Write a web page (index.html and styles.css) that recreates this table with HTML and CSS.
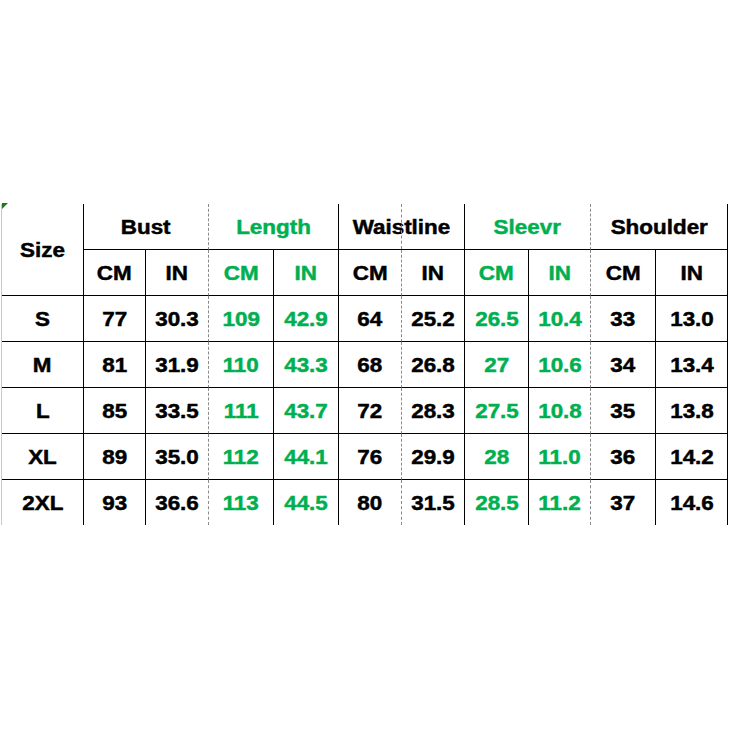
FILE: index.html
```html
<!DOCTYPE html>
<html>
<head>
<meta charset="utf-8">
<link rel="stylesheet" href="styles.css">
</head>
<body>
<div class="chart">
  <div class="c size"><span class="t">Size</span></div>
  <div class="c span2 dr"><span class="t">Bust</span></div>
  <div class="c span2 g"><span class="t">Length</span></div>
  <div class="c span2 mid"><span class="t">Waistline</span></div>
  <div class="c span2 g dr"><span class="t">Sleevr</span></div>
  <div class="c span2"><span class="t">Shoulder</span></div>

  <div class="c"><span class="t">CM</span></div>
  <div class="c dr"><span class="t">IN</span></div>
  <div class="c g"><span class="t">CM</span></div>
  <div class="c g"><span class="t">IN</span></div>
  <div class="c dr"><span class="t">CM</span></div>
  <div class="c"><span class="t">IN</span></div>
  <div class="c g"><span class="t">CM</span></div>
  <div class="c g dr"><span class="t">IN</span></div>
  <div class="c"><span class="t">CM</span></div>
  <div class="c"><span class="t">IN</span></div>

  <div class="c"><span class="t">S</span></div>
  <div class="c"><span class="t">77</span></div>
  <div class="c dr"><span class="t">30.3</span></div>
  <div class="c g"><span class="t">109</span></div>
  <div class="c g"><span class="t">42.9</span></div>
  <div class="c dr"><span class="t">64</span></div>
  <div class="c"><span class="t">25.2</span></div>
  <div class="c g"><span class="t">26.5</span></div>
  <div class="c g dr"><span class="t">10.4</span></div>
  <div class="c"><span class="t">33</span></div>
  <div class="c"><span class="t">13.0</span></div>

  <div class="c"><span class="t">M</span></div>
  <div class="c"><span class="t">81</span></div>
  <div class="c dr"><span class="t">31.9</span></div>
  <div class="c g"><span class="t">110</span></div>
  <div class="c g"><span class="t">43.3</span></div>
  <div class="c dr"><span class="t">68</span></div>
  <div class="c"><span class="t">26.8</span></div>
  <div class="c g"><span class="t">27</span></div>
  <div class="c g dr"><span class="t">10.6</span></div>
  <div class="c"><span class="t">34</span></div>
  <div class="c"><span class="t">13.4</span></div>

  <div class="c"><span class="t">L</span></div>
  <div class="c"><span class="t">85</span></div>
  <div class="c dr"><span class="t">33.5</span></div>
  <div class="c g"><span class="t">111</span></div>
  <div class="c g"><span class="t">43.7</span></div>
  <div class="c dr"><span class="t">72</span></div>
  <div class="c"><span class="t">28.3</span></div>
  <div class="c g"><span class="t">27.5</span></div>
  <div class="c g dr"><span class="t">10.8</span></div>
  <div class="c"><span class="t">35</span></div>
  <div class="c"><span class="t">13.8</span></div>

  <div class="c"><span class="t">XL</span></div>
  <div class="c"><span class="t">89</span></div>
  <div class="c dr"><span class="t">35.0</span></div>
  <div class="c g"><span class="t">112</span></div>
  <div class="c g"><span class="t">44.1</span></div>
  <div class="c dr"><span class="t">76</span></div>
  <div class="c"><span class="t">29.9</span></div>
  <div class="c g"><span class="t">28</span></div>
  <div class="c g dr"><span class="t">11.0</span></div>
  <div class="c"><span class="t">36</span></div>
  <div class="c"><span class="t">14.2</span></div>

  <div class="c nb"><span class="t">2XL</span></div>
  <div class="c nb"><span class="t">93</span></div>
  <div class="c nb dr"><span class="t">36.6</span></div>
  <div class="c nb g"><span class="t">113</span></div>
  <div class="c nb g"><span class="t">44.5</span></div>
  <div class="c nb dr"><span class="t">80</span></div>
  <div class="c nb"><span class="t">31.5</span></div>
  <div class="c nb g"><span class="t">28.5</span></div>
  <div class="c nb g dr"><span class="t">11.2</span></div>
  <div class="c nb"><span class="t">37</span></div>
  <div class="c nb"><span class="t">14.6</span></div>
</div>
</body>
</html>
```

FILE: styles.css
```css
html, body {
  margin: 0;
  padding: 0;
  background: #ffffff;
}

body {
  font-family: "Liberation Sans", Arial, sans-serif;
  font-weight: bold;
  font-size: 19.5px;
  color: #000000;
}

.chart {
  display: grid;
  grid-template-columns: 82px 62px 63px 65px 65px 63px 63px 64px 62px 65px 72px;
  grid-template-rows: 46px 46px 46px 46px 46px 46px 45px;
  width: 726px;
  margin: 204px 0 0 1px;
  border-left: 1px solid #c3cad6;
}

.c {
  position: relative;
  box-sizing: border-box;
  display: flex;
  align-items: center;
  justify-content: center;
  border-right: 1px solid #000000;
  border-bottom: 1px solid #000000;
  padding-top: 2px;
}

.t {
  display: inline-block;
  transform: scaleX(1.15);
  line-height: 1;
  -webkit-text-stroke: 0.45px currentColor;
}

.g {
  color: #00b050;
}

.dr {
  border-right: 1px dashed #8a8a8a;
}

.nb {
  border-bottom: none;
}

.span2 {
  grid-column: span 2;
}

.size {
  grid-row: span 2;
}

.size::before {
  content: "";
  position: absolute;
  top: -1px;
  left: 0;
  width: 0;
  height: 0;
  border-top: 6px solid #1f7a1f;
  border-right: 6px solid transparent;
}

.mid::after {
  content: "";
  position: absolute;
  top: 0;
  bottom: 0;
  left: 62px;
  border-left: 1px dashed #8a8a8a;
}
```
